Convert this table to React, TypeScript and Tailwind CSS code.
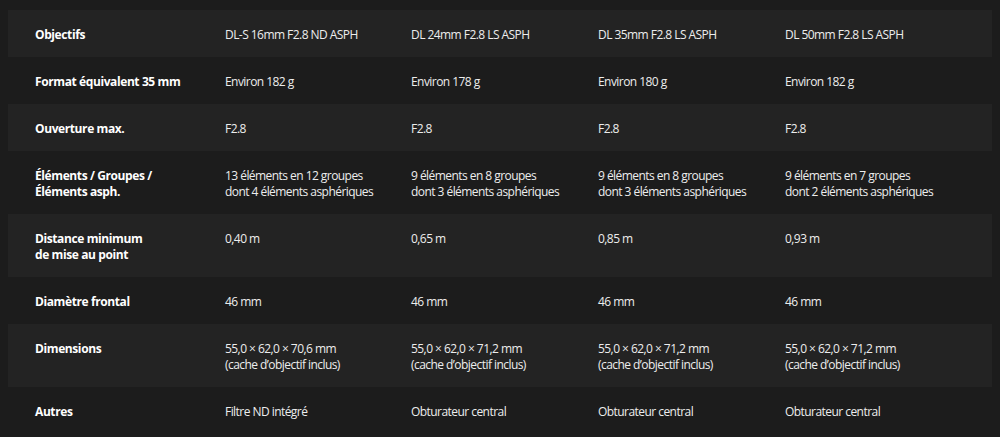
const rows: { label: string[]; values: string[][] }[] = [
  {
    label: ["Objectifs"],
    values: [["DL-S 16mm F2.8 ND ASPH"], ["DL 24mm F2.8 LS ASPH"], ["DL 35mm F2.8 LS ASPH"], ["DL 50mm F2.8 LS ASPH"]],
  },
  {
    label: ["Format équivalent 35 mm"],
    values: [["Environ 182 g"], ["Environ 178 g"], ["Environ 180 g"], ["Environ 182 g"]],
  },
  {
    label: ["Ouverture max."],
    values: [["F2.8"], ["F2.8"], ["F2.8"], ["F2.8"]],
  },
  {
    label: ["Éléments / Groupes /", "Éléments asph."],
    values: [
      ["13 éléments en 12 groupes", "dont 4 éléments asphériques"],
      ["9 éléments en 8 groupes", "dont 3 éléments asphériques"],
      ["9 éléments en 8 groupes", "dont 3 éléments asphériques"],
      ["9 éléments en 7 groupes", "dont 2 éléments asphériques"],
    ],
  },
  {
    label: ["Distance minimum", "de mise au point"],
    values: [["0,40 m"], ["0,65 m"], ["0,85 m"], ["0,93 m"]],
  },
  {
    label: ["Diamètre frontal"],
    values: [["46 mm"], ["46 mm"], ["46 mm"], ["46 mm"]],
  },
  {
    label: ["Dimensions"],
    values: [
      ["55,0 × 62,0 × 70,6 mm", "(cache d’objectif inclus)"],
      ["55,0 × 62,0 × 71,2 mm", "(cache d’objectif inclus)"],
      ["55,0 × 62,0 × 71,2 mm", "(cache d’objectif inclus)"],
      ["55,0 × 62,0 × 71,2 mm", "(cache d’objectif inclus)"],
    ],
  },
  {
    label: ["Autres"],
    values: [["Filtre ND intégré"], ["Obturateur central"], ["Obturateur central"], ["Obturateur central"]],
  },
];

export default function App() {
  return (
    <div
      className="w-[1000px] h-[437px] overflow-hidden bg-[#1c1c1c] pt-[10px] px-[8px] text-[12px] leading-[16px]"
      style={{ fontFamily: '"Open Sans", sans-serif' }}
    >
      {rows.map((row, i) => (
        <div
          key={i}
          className={`grid grid-cols-[190px_186px_187px_187px_1fr] pt-[17px] pb-[14px] ${
            i % 2 === 0 ? "bg-[#232323]" : "bg-[#1c1c1c]"
          }`}
        >
          {/* label */}
          <div className="pl-[27px] font-bold text-white tracking-[-0.4px]">
            {row.label.map((l, j) => (
              <div key={j}>{l}</div>
            ))}
          </div>
          {row.values.map((v, k) => (
            <div key={k} className="pl-[27px] text-[#ededed] tracking-[-0.55px]">
              {v.map((l, j) => (
                <div key={j}>{l}</div>
              ))}
            </div>
          ))}
        </div>
      ))}
    </div>
  );
}
